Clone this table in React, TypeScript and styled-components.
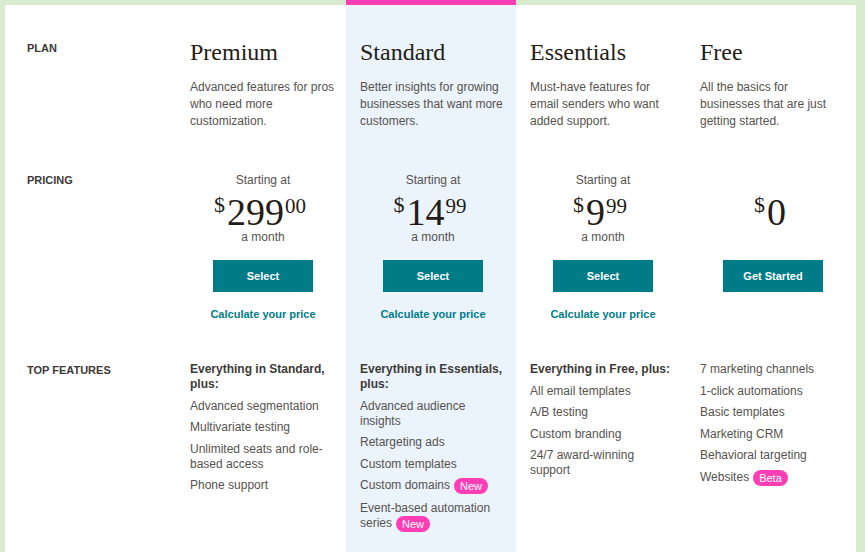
import React from "react";
import styled, { createGlobalStyle } from "styled-components";

const GlobalStyle = createGlobalStyle`
  html, body { margin: 0; padding: 0; }
  body {
    font-family: "Liberation Sans", Arial, sans-serif;
    -webkit-font-smoothing: antialiased;
  }
`;

const TEAL = "#007c89";
const PINK = "#ff3eb5";
const BLUE = "#ebf3fc";
const GREEN = "#d9ebcf";

type Row = "plan" | "pricing" | "features";

const rowPad: Record<Row, number> = { plan: 33, pricing: 42, features: 40 };
const labelPad: Record<Row, number> = { plan: 35, pricing: 42, features: 40 };

const Page = styled.div`
  display: flex;
  min-height: 100vh;
  box-sizing: border-box;
  padding: 0 9px 0 5px;
  background: ${GREEN};
`;

const Table = styled.div`
  display: grid;
  grid-template-columns: 171px repeat(4, 170px);
  grid-template-rows: 5px auto auto 1fr;
  width: 851px;
`;

const Strip = styled.div<{ $highlight?: boolean }>`
  background: ${(p) => (p.$highlight ? PINK : "transparent")};
`;

const Cell = styled.div<{ $highlight?: boolean; $row: Row }>`
  background: ${(p) => (p.$highlight ? BLUE : "#fff")};
  padding: ${(p) => rowPad[p.$row]}px 10px 0 14px;
  display: flex;
  flex-direction: column;
  align-items: ${(p) => (p.$row === "pricing" ? "center" : "stretch")};
  min-width: 0;
`;

const LabelCell = styled.div<{ $row: Row }>`
  background: #fff;
  padding: ${(p) => labelPad[p.$row]}px 0 0 22px;
`;

const Label = styled.div`
  font-size: 11px;
  line-height: 17px;
  font-weight: 700;
  color: #3d3a37;
  text-transform: uppercase;
`;

const PlanName = styled.h2`
  margin: 0;
  font-family: "Liberation Serif", "Times New Roman", serif;
  font-weight: 400;
  font-size: 24px;
  line-height: 29px;
  color: #241c15;
`;

const Description = styled.p`
  margin: 12px 0 0;
  font-size: 12px;
  line-height: 17px;
  color: #56524e;
`;

const Caption = styled.div<{ $hidden?: boolean }>`
  font-size: 12px;
  line-height: 17px;
  height: 17px;
  color: #56524e;
  visibility: ${(p) => (p.$hidden ? "hidden" : "visible")};
`;

const Price = styled.div`
  display: flex;
  align-items: flex-start;
  justify-content: center;
  height: 34px;
  margin-top: 6px;
  margin-left: -6px;
  font-family: "Liberation Serif", "Times New Roman", serif;
  color: #241c15;
`;

const Dollar = styled.span`
  font-size: 22px;
  line-height: 22px;
  margin-top: -1px;
  margin-right: 2px;
`;

const Whole = styled.span`
  font-size: 38px;
  line-height: 34px;
`;

const Cents = styled.span`
  font-size: 21px;
  line-height: 21px;
  margin-top: 1px;
  margin-left: 1px;
`;

const Button = styled.button`
  margin-top: 14px;
  width: 100px;
  height: 32px;
  border: 0;
  background: ${TEAL};
  color: #fff;
  font-family: "Liberation Sans", Arial, sans-serif;
  font-size: 11px;
  font-weight: 700;
  cursor: pointer;
`;

const CalcLink = styled.a`
  margin-top: 14px;
  font-size: 11px;
  line-height: 16px;
  font-weight: 700;
  color: ${TEAL};
  text-decoration: none;
`;

const FeatureList = styled.ul`
  margin: 0;
  padding: 0;
  list-style: none;
  display: flex;
  flex-direction: column;
  gap: 6.6px;
`;

const FeatureHead = styled.li`
  font-size: 12px;
  line-height: 15px;
  font-weight: 700;
  color: #3d3a37;
`;

const Feature = styled.li`
  font-size: 12px;
  line-height: 15px;
  color: #56524e;
`;

const Badge = styled.span`
  display: inline-block;
  margin-left: 4px;
  height: 16px;
  padding: 0 6px;
  border-radius: 8px;
  background: ${PINK};
  color: #fff;
  font-size: 11px;
  line-height: 16px;
  vertical-align: middle;
`;

type FeatureItem = { text: string; badge?: string };

type Plan = {
  name: string;
  desc: string;
  highlight?: boolean;
  whole: string;
  cents?: string;
  starting: boolean;
  cta: string;
  calc: boolean;
  head?: string;
  features: FeatureItem[];
};

const plans: Plan[] = [
  {
    name: "Premium",
    desc: "Advanced features for pros who need more customization.",
    whole: "299",
    cents: "00",
    starting: true,
    cta: "Select",
    calc: true,
    head: "Everything in Standard, plus:",
    features: [
      { text: "Advanced segmentation" },
      { text: "Multivariate testing" },
      { text: "Unlimited seats and role-based access" },
      { text: "Phone support" },
    ],
  },
  {
    name: "Standard",
    desc: "Better insights for growing businesses that want more customers.",
    highlight: true,
    whole: "14",
    cents: "99",
    starting: true,
    cta: "Select",
    calc: true,
    head: "Everything in Essentials, plus:",
    features: [
      { text: "Advanced audience insights" },
      { text: "Retargeting ads" },
      { text: "Custom templates" },
      { text: "Custom domains", badge: "New" },
      { text: "Event-based automation series", badge: "New" },
    ],
  },
  {
    name: "Essentials",
    desc: "Must-have features for email senders who want added support.",
    whole: "9",
    cents: "99",
    starting: true,
    cta: "Select",
    calc: true,
    head: "Everything in Free, plus:",
    features: [
      { text: "All email templates" },
      { text: "A/B testing" },
      { text: "Custom branding" },
      { text: "24/7 award-winning support" },
    ],
  },
  {
    name: "Free",
    desc: "All the basics for businesses that are just getting started.",
    whole: "0",
    starting: false,
    cta: "Get Started",
    calc: false,
    features: [
      { text: "7 marketing channels" },
      { text: "1-click automations" },
      { text: "Basic templates" },
      { text: "Marketing CRM" },
      { text: "Behavioral targeting" },
      { text: "Websites", badge: "Beta" },
    ],
  },
];

export default function App() {
  return (
    <>
      <GlobalStyle />
      <Page>
        <Table>
          <Strip />
          {plans.map((p) => (
            <Strip key={p.name} $highlight={p.highlight} />
          ))}

          <LabelCell $row="plan">
            <Label>Plan</Label>
          </LabelCell>
          {plans.map((p) => (
            <Cell key={p.name} $row="plan" $highlight={p.highlight}>
              <PlanName>{p.name}</PlanName>
              <Description>{p.desc}</Description>
            </Cell>
          ))}

          <LabelCell $row="pricing">
            <Label>Pricing</Label>
          </LabelCell>
          {plans.map((p) => (
            <Cell key={p.name} $row="pricing" $highlight={p.highlight}>
              <Caption $hidden={!p.starting}>Starting at</Caption>
              <Price>
                <Dollar>$</Dollar>
                <Whole>{p.whole}</Whole>
                {p.cents && <Cents>{p.cents}</Cents>}
              </Price>
              <Caption $hidden={!p.starting}>a month</Caption>
              <Button>{p.cta}</Button>
              {p.calc && <CalcLink href="#">Calculate your price</CalcLink>}
            </Cell>
          ))}

          <LabelCell $row="features">
            <Label>Top features</Label>
          </LabelCell>
          {plans.map((p) => (
            <Cell key={p.name} $row="features" $highlight={p.highlight}>
              <FeatureList>
                {p.head && <FeatureHead>{p.head}</FeatureHead>}
                {p.features.map((f) => (
                  <Feature key={f.text}>
                    {f.text}
                    {f.badge && <Badge>{f.badge}</Badge>}
                  </Feature>
                ))}
              </FeatureList>
            </Cell>
          ))}
        </Table>
      </Page>
    </>
  );
}
